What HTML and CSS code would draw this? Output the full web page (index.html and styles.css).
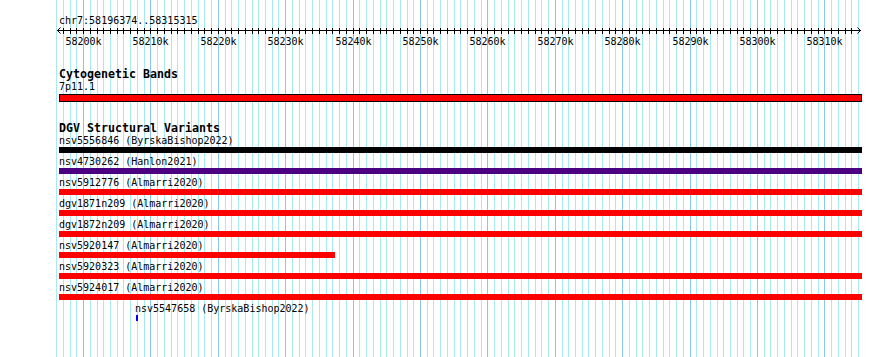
FILE: index.html
```html
<!DOCTYPE html>
<html lang="en">
<head>
  <meta charset="UTF-8" />
  <title>chr7:58196374..58315315</title>
  <link rel="stylesheet" href="styles.css">
</head>
<body>
  <div class="panel">
    <svg id="grid" class="grid" width="890" height="357"></svg>

    <div class="tracks">
      <div class="locus">chr7:58196374..58315315</div>
      <svg id="ruler" class="ruler" width="890" height="21"></svg>

      <div class="track">
        <h2>Cytogenetic Bands</h2>
        <span class="label" style="margin-left:59px">7p11.1</span>
        <div class="band" style="margin-left:59px;width:803px"></div>
      </div>

      <div class="track">
        <h2>DGV Structural Variants</h2>
        <div class="feature">
          <span class="label" style="margin-left:59px">nsv5556846 (ByrskaBishop2022)</span>
          <div class="bar black" style="margin-left:59px;width:803px"></div>
        </div>
        <div class="feature">
          <span class="label" style="margin-left:59px">nsv4730262 (Hanlon2021)</span>
          <div class="bar indigo" style="margin-left:59px;width:803px"></div>
        </div>
        <div class="feature">
          <span class="label" style="margin-left:59px">nsv5912776 (Almarri2020)</span>
          <div class="bar red" style="margin-left:59px;width:803px"></div>
        </div>
        <div class="feature">
          <span class="label" style="margin-left:59px">dgv1871n209 (Almarri2020)</span>
          <div class="bar red" style="margin-left:59px;width:803px"></div>
        </div>
        <div class="feature">
          <span class="label" style="margin-left:59px">dgv1872n209 (Almarri2020)</span>
          <div class="bar red" style="margin-left:59px;width:803px"></div>
        </div>
        <div class="feature">
          <span class="label" style="margin-left:59px">nsv5920147 (Almarri2020)</span>
          <div class="bar red" style="margin-left:59px;width:276px"></div>
        </div>
        <div class="feature">
          <span class="label" style="margin-left:59px">nsv5920323 (Almarri2020)</span>
          <div class="bar red" style="margin-left:59px;width:803px"></div>
        </div>
        <div class="feature">
          <span class="label" style="margin-left:59px">nsv5924017 (Almarri2020)</span>
          <div class="bar red" style="margin-left:59px;width:803px"></div>
        </div>
        <div class="feature">
          <span class="label" style="margin-left:135px">nsv5547658 (ByrskaBishop2022)</span>
          <div class="bar blue" style="margin-left:136px;width:2px"></div>
        </div>
      </div>
    </div>
  </div>

  <script>
    const START = 58196374;
    const X0 = 58.6;
    const SCALE = 0.006739; // pixels per bp
    const NS = "http://www.w3.org/2000/svg";

    const gridEl = document.getElementById('grid');
    const rulerEl = document.getElementById('ruler');

    function toX(bp) {
      return Math.round(X0 + (bp - START) * SCALE);
    }

    function add(parent, tag, attrs, text) {
      const el = document.createElementNS(NS, tag);
      for (const k in attrs) el.setAttribute(k, attrs[k]);
      if (text) el.textContent = text;
      parent.appendChild(el);
      return el;
    }

    // ruler baseline and arrow heads
    add(rulerEl, 'rect', { x: 57, y: 3, width: 804, height: 1, class: 'axis' });
    add(rulerEl, 'polyline', { points: '60.5,0.5 57.5,3.5 60.5,6.5', class: 'arrow' });
    add(rulerEl, 'polyline', { points: '857.5,0.5 860.5,3.5 857.5,6.5', class: 'arrow' });

    for (let k = 58196; k <= 58315; k++) {
      const x = toX(k * 1000);
      const major = k % 10 === 0;
      add(gridEl, 'rect', { x: x, y: 0, width: 1, height: 357, class: major ? 'major' : 'minor' });

      if (x > 58 && x < 858) {
        add(rulerEl, 'rect', { x: x, y: 1, width: 1, height: 6, class: 'axis' });
      }
      if (major) {
        add(rulerEl, 'text', { x: x + 0.5, y: 17.5, class: 'tick-label' }, k + 'k');
      }
    }
  </script>
</body>
</html>
```

FILE: styles.css
```css
body {
  margin: 0;
  background: #fff;
  font-family: 'DejaVu Sans Mono', 'Liberation Mono', monospace;
  color: #000;
}

.panel {
  display: grid;
  width: 890px;
  height: 357px;
  overflow: hidden;
}

.grid,
.tracks {
  grid-area: 1 / 1;
}

.grid {
  display: block;
  shape-rendering: crispEdges;
}

.grid .minor {
  fill: #a9e9f0;
}

.grid .major {
  fill: #88c6ec;
}

.locus {
  margin-top: 15px;
  padding-left: 59px;
  font-size: 10px;
  line-height: 12px;
}

.ruler {
  display: block;
}

.ruler .axis {
  fill: #000;
  shape-rendering: crispEdges;
}

.ruler .arrow {
  fill: none;
  stroke: #000;
  stroke-width: 1;
}

.tick-label {
  font-family: 'DejaVu Sans Mono', 'Liberation Mono', monospace;
  font-size: 10px;
  text-anchor: middle;
  fill: #000;
}

.track {
  margin-top: 20px;
}

.track h2 {
  margin: 0;
  padding-left: 59px;
  font-size: 11.63px;
  line-height: 13px;
  font-weight: bold;
}

.label {
  display: block;
  font-size: 10px;
  line-height: 12px;
  white-space: pre;
}

.band {
  box-sizing: border-box;
  height: 8px;
  margin-top: 1px;
  background: #ff0000;
  border: 1px solid #000;
}

.feature {
  margin-bottom: 3px;
}

.bar {
  height: 6px;
}

.bar.black {
  background: #000;
}

.bar.indigo {
  background: #4b0082;
}

.bar.red {
  background: #ff0000;
}

.bar.blue {
  background: #0000ff;
}
```
